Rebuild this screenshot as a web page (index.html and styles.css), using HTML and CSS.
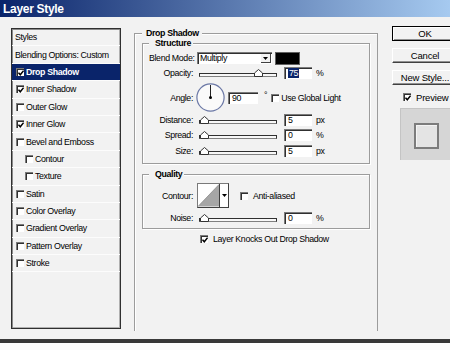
FILE: index.html
```html
<!DOCTYPE html>
<html lang="en">
<head>
    <meta charset="UTF-8">
    <title>Layer Style</title>
    <link rel="stylesheet" href="styles.css">
</head>
<body>
<div class="window">
    <!-- Title bar -->
    <div class="titlebar">Layer Style</div>

    <div class="dialog">
        <!-- Styles list -->
        <div class="style-list">
            <div class="style-row plain">Styles</div>
            <div class="style-row plain">Blending Options: Custom</div>
            <div class="style-row selected"><span class="cb"><svg viewBox="0 0 6 6" width="6" height="6"><path d="M0.5 2.6 L2.3 4.8 L5.6 0.6" fill="none" stroke="#000" stroke-width="1.5"/></svg></span>Drop Shadow</div>
            <div class="style-row"><span class="cb"><svg viewBox="0 0 6 6" width="6" height="6"><path d="M0.5 2.6 L2.3 4.8 L5.6 0.6" fill="none" stroke="#000" stroke-width="1.5"/></svg></span>Inner Shadow</div>
            <div class="style-row"><span class="cb"></span>Outer Glow</div>
            <div class="style-row"><span class="cb"><svg viewBox="0 0 6 6" width="6" height="6"><path d="M0.5 2.6 L2.3 4.8 L5.6 0.6" fill="none" stroke="#000" stroke-width="1.5"/></svg></span>Inner Glow</div>
            <div class="style-row"><span class="cb"></span>Bevel and Emboss</div>
            <div class="style-row indent"><span class="cb"></span>Contour</div>
            <div class="style-row indent"><span class="cb"></span>Texture</div>
            <div class="style-row"><span class="cb"></span>Satin</div>
            <div class="style-row"><span class="cb"></span>Color Overlay</div>
            <div class="style-row"><span class="cb"></span>Gradient Overlay</div>
            <div class="style-row"><span class="cb"></span>Pattern Overlay</div>
            <div class="style-row"><span class="cb"></span>Stroke</div>
        </div>

        <!-- Drop Shadow settings -->
        <fieldset class="effect">
            <legend>Drop Shadow</legend>

            <fieldset class="sub structure">
                <legend>Structure</legend>
                <div class="field">
                    <span class="label">Blend Mode:</span>
                    <div class="select">
                        <span class="select-text">Multiply</span>
                        <span class="select-btn"><svg viewBox="0 0 5 3" width="5" height="3"><path d="M0 0 H5 L2.5 3 Z" fill="#000"/></svg></span>
                    </div>
                    <span class="swatch"></span>
                </div>
                <div class="field">
                    <span class="label">Opacity:</span>
                    <div class="slider"><div class="track"></div><svg class="thumb" style="left:55px" viewBox="0 0 9 8" width="9" height="8"><path d="M0.5 7.5 V4 L4.5 0.5 L8.5 4 V7.5 Z" fill="#fff" stroke="#333"/></svg></div>
                    <span class="num"><span class="hl">75</span></span>
                    <span class="unit">%</span>
                </div>
                <div class="field angle">
                    <span class="label">Angle:</span>
                    <svg class="dial" viewBox="0 0 29 29" width="29" height="29">
                        <circle cx="14.5" cy="14.5" r="13.6" fill="#fafafa" stroke="#6b78a6" stroke-width="1.2"/>
                        <line x1="14.5" y1="14.5" x2="14.5" y2="2" stroke="#222" stroke-width="1"/>
                        <circle cx="14.5" cy="14.5" r="1.5" fill="#000"/>
                    </svg>
                    <span class="num wide">90</span>
                    <span class="deg">°</span>
                    <span class="cb"></span>
                    <span class="cb-text">Use Global Light</span>
                </div>
                <div class="field">
                    <span class="label">Distance:</span>
                    <div class="slider"><div class="track"></div><svg class="thumb" style="left:1px" viewBox="0 0 9 8" width="9" height="8"><path d="M0.5 7.5 V4 L4.5 0.5 L8.5 4 V7.5 Z" fill="#fff" stroke="#333"/></svg></div>
                    <span class="num">5</span>
                    <span class="unit">px</span>
                </div>
                <div class="field">
                    <span class="label">Spread:</span>
                    <div class="slider"><div class="track"></div><svg class="thumb" style="left:1px" viewBox="0 0 9 8" width="9" height="8"><path d="M0.5 7.5 V4 L4.5 0.5 L8.5 4 V7.5 Z" fill="#fff" stroke="#333"/></svg></div>
                    <span class="num">0</span>
                    <span class="unit">%</span>
                </div>
                <div class="field size">
                    <span class="label">Size:</span>
                    <div class="slider"><div class="track"></div><svg class="thumb" style="left:1px" viewBox="0 0 9 8" width="9" height="8"><path d="M0.5 7.5 V4 L4.5 0.5 L8.5 4 V7.5 Z" fill="#fff" stroke="#333"/></svg></div>
                    <span class="num">5</span>
                    <span class="unit">px</span>
                </div>
            </fieldset>

            <fieldset class="sub quality">
                <legend>Quality</legend>
                <div class="field contour-row">
                    <span class="label">Contour:</span>
                    <div class="contour">
                        <svg class="curve" viewBox="0 0 22 23" width="22" height="23"><path d="M0 23 L22 0 V23 Z" fill="#a6a6a6"/><path d="M0 23 L22 0" stroke="#888" stroke-width="0.8"/></svg>
                        <span class="contour-btn"><svg viewBox="0 0 5 3" width="5" height="3"><path d="M0 0 H5 L2.5 3 Z" fill="#000"/></svg></span>
                    </div>
                    <span class="cb aa"></span>
                    <span class="cb-text">Anti-aliased</span>
                </div>
                <div class="field noise">
                    <span class="label">Noise:</span>
                    <div class="slider"><div class="track"></div><svg class="thumb" style="left:1px" viewBox="0 0 9 8" width="9" height="8"><path d="M0.5 7.5 V4 L4.5 0.5 L8.5 4 V7.5 Z" fill="#fff" stroke="#333"/></svg></div>
                    <span class="num">0</span>
                    <span class="unit">%</span>
                </div>
            </fieldset>

            <div class="knock">
                <span class="cb"><svg viewBox="0 0 6 6" width="6" height="6"><path d="M0.5 2.6 L2.3 4.8 L5.6 0.6" fill="none" stroke="#000" stroke-width="1.5"/></svg></span>
                <span class="cb-text">Layer Knocks Out Drop Shadow</span>
            </div>
        </fieldset>

        <!-- Buttons and preview -->
        <div class="buttons">
            <div class="btn default">OK</div>
            <div class="btn">Cancel</div>
            <div class="btn">New Style...</div>
            <div class="preview-check">
                <span class="cb"><svg viewBox="0 0 6 6" width="6" height="6"><path d="M0.5 2.6 L2.3 4.8 L5.6 0.6" fill="none" stroke="#000" stroke-width="1.5"/></svg></span>
                <span class="cb-text">Preview</span>
            </div>
            <div class="preview">
                <div class="preview-square"></div>
            </div>
        </div>
    </div>
</div>
</body>
</html>
```

FILE: styles.css
```css
/* Basic reset */
* {
    margin: 0;
    padding: 0;
    box-sizing: border-box;
}

body {
    width: 450px;
    height: 343px;
    overflow: hidden;
    background-color: #f2f2f2;
    color: #000;
    font-family: "Liberation Sans", Arial, sans-serif;
    font-size: 8.8px;
    letter-spacing: -0.35px;
}

/* Window frame */
.window {
    width: 450px;
    height: 343px;
    display: flex;
    flex-direction: column;
    overflow: hidden;
    border-bottom: 4px solid #3a3a3a;
}

.titlebar {
    height: 17px;
    padding-left: 3px;
    background: linear-gradient(to right, #0a246a, #a6caf0);
    color: white;
    font-size: 12px;
    font-weight: bold;
    letter-spacing: -0.3px;
    line-height: 18px;
}

.dialog {
    flex: 1;
    display: flex;
    align-items: flex-start;
}

/* Styles list */
.style-list {
    margin: 11px 0 0 11px;
    width: 110px;
    height: 301px;
    flex-shrink: 0;
    border: 1px solid #303030;
    box-shadow: inset 1px 1px #8a8a8a, inset -1px -1px #b0b0b0;
}

.style-row {
    height: 17.4px;
    display: flex;
    align-items: center;
    padding-left: 4px;
    border-bottom: 1px solid #fcfcfc;
    white-space: nowrap;
}

.style-row.plain {
    padding-left: 3px;
}

.style-row.indent {
    padding-left: 13px;
}

.style-row.selected {
    background-color: #0a246a;
    color: white;
    font-weight: bold;
}

.style-row .cb {
    margin-right: 2px;
}

/* Checkbox */
.cb {
    width: 8px;
    height: 8px;
    flex-shrink: 0;
    display: flex;
    align-items: center;
    justify-content: center;
    background-color: #fff;
    border-top: 1px solid #7a7a7a;
    border-left: 1px solid #7a7a7a;
    box-shadow: inset 1px 1px #303030;
}

.cb svg {
    margin: 1px 0 0 1px;
}

.cb-text {
    margin-left: 2px;
    white-space: nowrap;
}

/* Group boxes */
.effect {
    margin: 12px 0 0 13px;
    width: 244px;
    height: 302px;
    flex-shrink: 0;
    min-width: 0;
    padding: 0 7px;
    border: 1px solid #9c9c9c;
    border-bottom: none;
    box-shadow: inset 1px 1px #fff;
}

.effect > legend {
    padding: 0 3px 0 4px;
    font-weight: bold;
    line-height: 9px;
    background-color: #f2f2f2;
}

.sub {
    min-width: 0;
    padding: 2px 0 5px 6px;
    border: 1px solid #9c9c9c;
    box-shadow: inset 1px 1px #fff, 1px 1px #fff;
}

.sub > legend {
    padding: 0 2px 0 6px;
    font-weight: bold;
    line-height: 10px;
    background-color: #f2f2f2;
}

.quality {
    margin-top: 5px;
    padding: 4px 0 3px 6px;
}

/* Rows of controls */
.field {
    display: flex;
    align-items: center;
    height: 14px;
    margin-top: 1px;
}

.field.angle {
    height: 29px;
    margin-top: 3px;
}

.field.size {
    margin-top: 2px;
}

.field.contour-row {
    height: 25px;
    margin-top: 0;
}

.field.noise {
    margin-top: 3px;
}

.field .label {
    width: 44px;
    margin-right: 3px;
    text-align: right;
    white-space: nowrap;
}

/* Dropdown */
.select {
    margin-left: 1px;
    width: 75px;
    height: 12px;
    display: flex;
    background-color: #fff;
    border-top: 1px solid #7a7a7a;
    border-left: 1px solid #7a7a7a;
    box-shadow: inset 1px 1px #303030;
}

.select-text {
    flex: 1;
    padding-left: 2px;
    line-height: 11px;
}

.select-btn {
    width: 10px;
    margin: 1px 1px 1px 0;
    display: flex;
    align-items: center;
    justify-content: center;
    background-color: #f2f2f2;
    border-right: 1px solid #404040;
    border-bottom: 1px solid #404040;
}

.swatch {
    margin-left: 3px;
    width: 25px;
    height: 13px;
    background-color: #000;
    border: 1px solid #606060;
}

/* Slider */
.slider {
    position: relative;
    margin-left: 3px;
    width: 78px;
    height: 8px;
    padding-top: 4px;
}

.track {
    height: 4px;
    background-color: #f8f8f8;
    border: 1px solid #303030;
    border-bottom-color: #808080;
}

.thumb {
    position: absolute;
    top: 0;
}

/* Number input */
.num {
    margin-left: 7px;
    width: 28px;
    height: 12px;
    padding-left: 3px;
    line-height: 11px;
    background-color: #fff;
    border-top: 1px solid #7a7a7a;
    border-left: 1px solid #7a7a7a;
    box-shadow: inset 1px 1px #303030;
}

.num.wide {
    margin-left: 3px;
    width: 30px;
}

.num .hl {
    background-color: #0a246a;
    color: white;
    padding: 0 1px;
}

.unit {
    margin-left: 4px;
}

.deg {
    margin-left: 6px;
    margin-top: -5px;
}

.angle .cb {
    margin-left: 4px;
}

/* Contour picker */
.contour {
    margin-left: 1px;
    width: 32px;
    height: 25px;
    display: flex;
    background-color: #fff;
    border: 1px solid #404040;
    border-top-color: #7a7a7a;
    border-left-color: #7a7a7a;
}

.curve {
    border-right: 1px solid #404040;
}

.contour-btn {
    flex: 1;
    display: flex;
    align-items: center;
    justify-content: center;
}

.cb.aa {
    margin-left: 11px;
}

.quality .cb-text {
    margin-left: 5px;
}

.knock {
    display: flex;
    align-items: center;
    height: 12px;
    margin-top: 4px;
    padding-left: 58px;
}

.knock .cb-text {
    margin-left: 5px;
}

/* Buttons column */
.buttons {
    margin: 9px 0 0 14px;
    width: 66px;
    flex-shrink: 0;
    font-size: 9.5px;
    letter-spacing: -0.2px;
}

.btn {
    height: 15px;
    margin-bottom: 7px;
    text-align: center;
    line-height: 13px;
    background-color: #f2f2f2;
    border-top: 1px solid #fff;
    border-left: 1px solid #fff;
    border-bottom: 1px solid #404040;
    border-right: 1px solid #404040;
    box-shadow: inset -1px -1px #909090;
}

.btn.default {
    border: 1px solid #000;
    box-shadow: inset 1px 1px #fff, inset -1px -1px #909090;
}

.preview-check {
    display: flex;
    align-items: center;
    height: 12px;
    margin: -1px 0 0 11px;
}

.preview-check .cb-text {
    margin-left: 5px;
}

.preview {
    margin: 5px 0 0 8px;
    width: 60px;
    height: 52px;
    padding: 14px 0 0 13px;
    background-color: #d6d6d6;
    border-top: 1px solid #c4c4c4;
    border-left: 1px solid #c4c4c4;
}

.preview-square {
    width: 25px;
    height: 26px;
    background-color: #e4e4e4;
    border: 2px solid #7c7c7c;
    box-shadow: inset 1px 1px #f4f4f4;
}
```
